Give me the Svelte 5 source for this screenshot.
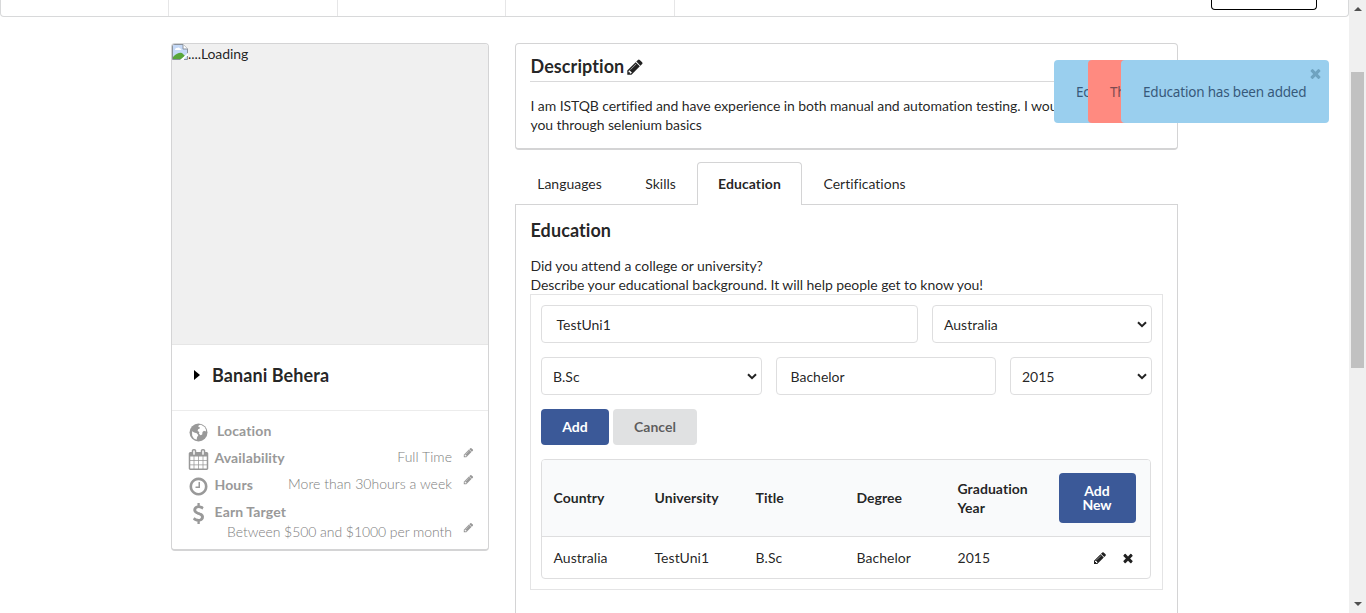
<script>
  const navCells = [0, 1, 2, 3];
  const tabs = [
    { label: 'Languages', width: 109 },
    { label: 'Skills', width: 73 },
    { label: 'Education', width: 105 },
    { label: 'Certifications', width: 125 }
  ];
  const active = 'Education';
  const columns = ['Country', 'University', 'Title', 'Degree', 'Graduation Year'];
  const record = ['Australia', 'TestUni1', 'B.Sc', 'Bachelor', '2015'];

  const pencil =
    'M491 1536l91-91-235-235-91 91v107h128v128h107zm523-928q0-22-22-22-10 0-17 7l-542 542q-7 7-7 17 0 22 22 22 10 0 17-7l542-542q7-7 7-17zm-54-192l416 416-832 832h-416v-416zm683 96q0 53-37 90l-166 166-416-416 166-165q36-38 90-38 53 0 91 38l235 234q37 39 37 91z';
  const cross =
    'M1490 1322q0 40-28 68l-136 136q-28 28-68 28t-68-28l-294-294-294 294q-28 28-68 28t-68-28l-136-136q-28-28-28-68t28-68l294-294-294-294q-28-28-28-68t28-68l136-136q28-28 68-28t68 28l294 294 294-294q28-28 68-28t68 28l136 136q28 28 28 68t-28 68l-294 294 294 294q28 28 28 68z';
  const calendar =
    'M192 1664h288v-288h-288v288zm352 0h320v-288h-320v288zm-352-352h288v-320h-288v320zm352 0h320v-320h-320v320zm-352-384h288v-288h-288v288zm736 736h320v-288h-320v288zm-384-736h320v-288h-320v288zm768 736h288v-288h-288v288zm-384-352h320v-320h-320v320zm-352-864v-288q0-13-9.5-22.5t-22.5-9.5h-64q-13 0-22.5 9.5t-9.5 22.5v288q0 13 9.5 22.5t22.5 9.5h64q13 0 22.5-9.5t9.5-22.5zm736 864h288v-320h-288v320zm-384-384h320v-288h-320v288zm384 0h288v-288h-288v288zm32-480v-288q0-13-9.5-22.5t-22.5-9.5h-64q-13 0-22.5 9.5t-9.5 22.5v288q0 13 9.5 22.5t22.5 9.5h64q13 0 22.5-9.5t9.5-22.5zm384-64v1280q0 52-38 90t-90 38h-1408q-52 0-90-38t-38-90v-1280q0-52 38-90t90-38h128v-96q0-66 47-113t113-47h64q66 0 113 47t47 113v96h384v-96q0-66 47-113t113-47h64q66 0 113 47t47 113v96h128q52 0 90 38t38 90z';
  const clock =
    'M1024 544v448q0 14-9 23t-23 9h-320q-14 0-23-9t-9-23v-64q0-14 9-23t23-9h224v-352q0-14 9-23t23-9h64q14 0 23 9t9 23zm416 352q0-148-73-273t-198-198-273-73-273 73-198 198-73 273 73 273 198 198 273 73 273-73 198-198 73-273zm224 0q0 209-103 385.5t-279.5 279.5-385.5 103-385.5-103-279.5-279.5-103-385.5 103-385.5 279.5-279.5 385.5-103 385.5 103 279.5 279.5 103 385.5z';
  const dollar =
    'M1362 1185q0 153-99.5 263.5t-258.5 136.5v175q0 14-9 23t-23 9h-135q-13 0-22.5-9.5t-9.5-22.5v-175q-66-9-127.5-31t-101.5-44.5-74-48-46.5-37.5-17.5-18q-17-21-2-41l103-135q7-10 23-12 15-2 24 9l2 2q113 99 243 125 37 8 74 8 81 0 142.5-43t61.5-122q0-28-15-53t-33.5-42-58.5-37.5-66-32-80-32.5q-39-16-61.5-25t-61.5-26.5-62.5-31-56.5-35.5-53.5-42.5-43.5-49-35.5-58-21-66.5-8.5-78q0-138 98-242t255-134v-180q0-13 9.5-22.5t22.5-9.5h135q14 0 23 9t9 23v176q57 6 110.5 23t87 33.5 63.5 37.5 39 29 15 14q17 18 5 38l-81 146q-8 15-23 16-14 3-27-7-3-3-14.5-12t-39-26.5-58.5-32-74.5-26-85.5-11.5q-95 0-155 43t-60 111q0 26 8.5 48t29.5 41.5 39.5 33 56 31 60.5 27 70 27.5q53 20 81 31.5t76 35 75.5 42.5 62 50 53 63.5 31.5 76.5 13 94z';
</script>

{#snippet icon(path, size)}
  <svg class="icon" width={size} height={size} viewBox="0 0 1792 1792" aria-hidden="true"><path d={path} /></svg>
{/snippet}

{#snippet picker(value)}
  <div class="field select">
    <span>{value}</span>
    <svg width="10" height="7" viewBox="0 0 10 7" aria-hidden="true"><path d="M1 1.2l4 4 4-4" /></svg>
  </div>
{/snippet}

<div class="window">
  <div class="page">
    <nav>
      {#each navCells as cell (cell)}<div class="cell"></div>{/each}
      <div class="outline"></div>
    </nav>

    <main>
      <aside class="card">
        <div class="photo">
          <svg width="16" height="16" viewBox="0 0 16 16" aria-hidden="true">
            <path d="M.5 .5H11l4.5 4.5v10.500H.5z" fill="#fff" />
            <path d="M1 1h10v4h4v10H1z" fill="#c5d9f7" />
            <path d="M3 5.500q.3-2 2-1.500 1.800-1.400 3 .4 1.600 0 1.400 1.600H3z" fill="#fff" />
            <path d="M1 15v-2q5-5 9-4l3 3-3 3z" fill="#58a63b" />
            <path d="M.5 15.500V.5H11l4.500 4.500v4.500M.5 15.500H9" fill="none" stroke="#8b929c" />
            <path d="M11 .5V5h4.500" fill="#fff" stroke="#8b929c" />
            <path d="M8 16l8-7v2l-5 5z" fill="#fff" />
            <path d="M12 15.500h3.500V12" fill="none" stroke="#8b929c" />
          </svg><span>....Loading</span>
        </div>
        <div class="name">
          <svg width="6" height="10" viewBox="0 0 6 10" aria-hidden="true"><path d="M0 0l6 5-6 5z" /></svg>
          <h2>Banani Behera</h2>
        </div>
        <div class="facts">
          <div class="fact location">
            <svg class="glyph" width="19" height="19" viewBox="0 0 19 19" aria-hidden="true">
              <circle cx="9.500" cy="9.500" r="9" />
              <path class="sea" d="M9.800 2.200l2.200-.5 3.600 2.200 1.500 3-.5 1.500-1.600-.6-1.500 1.200-.3 2.500-1.700.7-1.500-1.500.3-1.800-1.700-.8.5-1.800 1.700-.7-.2-1.600-1.400-.2zM3 8.200l2.200 1.300 2.600.8 1.500 2-1.200 1.800-.5 2.600-2.700-1.300-1.700-2.600z" />
            </svg>
            <b>Location</b>
          </div>
          <div class="fact">
            <span class="glyph">{@render icon(calendar, 21)}</span><b>Availability</b>
            <span class="value wide">Full Time</span><span class="edit">{@render icon(pencil, 11)}</span>
          </div>
          <div class="fact">
            <span class="glyph">{@render icon(clock, 21)}</span><b>Hours</b>
            <span class="value wide">More than 30hours a week</span><span class="edit">{@render icon(pencil, 11)}</span>
          </div>
          <div class="fact earn">
            <span class="glyph">{@render icon(dollar, 21)}</span><b>Earn Target</b>
          </div>
          <div class="fact last">
            <span class="value">Between $500 and $1000 per month</span><span class="edit">{@render icon(pencil, 11)}</span>
          </div>
        </div>
      </aside>

      <div class="content">
        <section class="description">
          <h3>Description<span>{@render icon(pencil, 18)}</span></h3>
          <p>I am ISTQB certified and have experience in both manual and automation testing. I wou<br />you through selenium basics</p>
        </section>

        <div class="tabs">
          {#each tabs as tab (tab.label)}
            <div class="tab" class:active={tab.label === active} style:width="{tab.width}px">{tab.label}</div>
          {/each}
        </div>

        <section class="panel">
          <h3>Education</h3>
          <p>Did you attend a college or university?<br />Describe your educational background. It will help people get to know you!</p>
          <div class="editor">
            <div class="row first">
              <div class="field wide">TestUni1</div>
              {@render picker('Australia')}
            </div>
            <div class="row second">
              {@render picker('B.Sc')}
              <div class="field">Bachelor</div>
              {@render picker('2015')}
            </div>
            <div class="buttons">
              <button class="primary add">Add</button>
              <button class="cancel">Cancel</button>
            </div>
            <div class="table">
              <div class="line head">
                {#each columns as column (column)}<div class="title">{column}</div>{/each}
                <div><button class="primary new">Add<br />New</button></div>
              </div>
              <div class="line">
                {#each record as item (item)}<div>{item}</div>{/each}
                <div class="actions">{@render icon(pencil, 14)}{@render icon(cross, 14)}</div>
              </div>
            </div>
          </div>
        </section>
      </div>
    </main>

    <div class="toast one">Ec</div>
    <div class="toast two">Th</div>
    <div class="toast three">Education has been added<span>{@render icon(cross, 15)}</span></div>
  </div>

  <div class="scrollbar">
    <svg width="8" height="4" viewBox="0 0 8 4" aria-hidden="true"><path d="M4 0l4 4H0z" /></svg>
    <div class="thumb"></div>
    <svg width="8" height="4" viewBox="0 0 8 4" aria-hidden="true"><path d="M0 0h8L4 4z" /></svg>
  </div>
</div>

<style>
  .window {
    display: flex;
    width: 1366px;
    height: 613px;
    overflow: hidden;
    background: #fff;
    color: rgba(0, 0, 0, 0.87);
    font: 14px/19px Lato, sans-serif;
    font-variant-ligatures: none;
  }
  .window, .window * { box-sizing: border-box; }
  .icon { display: block; fill: currentColor; }
  h2, h3, p { margin: 0; }
  h2, h3 { font-size: 18px; line-height: 23px; font-weight: 700; letter-spacing: 0.08px; }
  p { letter-spacing: -0.06px; white-space: nowrap; }
  .page { position: relative; width: 1349px; height: 613px; overflow: hidden; }

  nav {
    display: flex;
    height: 17px;
    border: 1px solid #d8d9da;
    border-top: 0;
    border-radius: 0 0 4px 4px;
  }
  .cell { flex: 0 0 168.450px; border-right: 1px solid #e6e6e7; }
  .outline {
    width: 106px;
    height: 10px;
    margin: 0 31px 0 auto;
    border: 1px solid #000;
    border-top: 0;
    border-radius: 0 0 4px 4px;
  }

  main { display: flex; align-items: flex-start; gap: 26px; padding: 26px 171px 0; }
  .card {
    width: 318px;
    height: 508px;
    border: 1px solid #d4d4d5;
    border-bottom-width: 2px;
    border-radius: 4px;
    overflow: hidden;
  }
  .photo {
    display: flex;
    align-items: flex-start;
    height: 300px;
    background: #f0f0f0;
  }
  .photo span { line-height: 20px; letter-spacing: -0.08px; }
  .name {
    display: flex;
    align-items: center;
    gap: 12px;
    height: 67px;
    padding: 0 0 5px 22px;
    border-top: 1px solid #e6e6e6;
    border-bottom: 1px solid #ececec;
  }
  .name h2 { padding-top: 1px; }
  .facts { padding: 6px 13px 0 16px; color: #999; }
  .fact { display: flex; height: 27px; }
  .glyph { flex: none; width: 21px; margin: 5px 5.500px 0 0; }
  .location .glyph { width: 19px; margin: 6px 9px 0 1px; fill: #999; }
  .location .sea { fill: #fff; }
  .fact b { line-height: 27px; letter-spacing: 0.13px; }
  .value { margin-left: auto; line-height: 25px; font-weight: 300; color: #7d7d7d; }
  .value.wide { letter-spacing: 0.04px; }
  .last .value { letter-spacing: -0.06px; }
  .edit { margin: 3px 1px 0 11px; }
  .fact.earn { height: 21px; }

  .content { width: 663px; }
  .description {
    height: 107px;
    padding: 11px 14px;
    border: 1px solid #d4d4d5;
    border-bottom-width: 2px;
    border-radius: 4px;
  }
  .description h3 { display: flex; height: 27px; border-bottom: 1px solid #d9d9da; padding-left: 0.500px; }
  .description h3 span { padding-top: 3px; margin-left: 2px; }
  .description p { padding: 14px 0 0 0.500px; letter-spacing: -0.085px; }

  .tabs { display: flex; margin-top: 12px; height: 43px; position: relative; z-index: 1; }
  .tab {
    flex: none;
    padding-top: 11px;
    height: 43px;
    border: 1px solid transparent;
    border-bottom: 0;
    text-align: center;
  }
  .tab.active {
    background: #fff;
    border-color: #d4d4d5;
    border-radius: 4px 4px 0 0;
    font-weight: 700;
    letter-spacing: 0.08px;
  }
  .panel {
    width: 663px;
    margin-top: -1px;
    height: 440px;
    padding: 14px 14px 0;
    border: 1px solid #d4d4d5;
  }
  .panel h3, .panel p { padding-left: 0.500px; }
  .panel p { margin-top: 14px; }
  .editor { height: 296px; padding: 10px; border: 1px solid #e4e4e5; }
  .row { display: grid; gap: 14px; }
  .first { grid-template-columns: 377px 220px; }
  .second { grid-template-columns: 221px 220px 142px; margin-top: 14px; }
  .field {
    height: 38px;
    padding: 0 13.500px;
    border: 1px solid #dededf;
    border-radius: 4px;
    line-height: 38px;
  }
  .field.wide { padding-left: 14.500px; }
  .select { display: flex; align-items: center; justify-content: space-between; padding: 0 4px 0 11px; }
  .select span { padding-top: 2px; }
  .select svg { fill: none; stroke: #222; stroke-width: 2; }
  .buttons { display: flex; gap: 4px; margin: 14px 0; }
  button {
    height: 36px;
    padding: 0;
    border: 0;
    border-radius: 4px;
    font: 700 14px/14px Lato, sans-serif;
  }
  .primary { background: #3b5998; color: #fff; }
  .add { width: 68px; }
  .cancel { width: 84px; background: #e0e1e2; color: rgba(0, 0, 0, 0.6); }
  .new { display: block; width: 77px; height: 50px; }
  .table { width: 610px; border: 1px solid #dededf; border-radius: 4px; overflow: hidden; }
  .line {
    display: grid;
    grid-template-columns: repeat(5, 101px) 1fr;
    align-items: center;
    height: 41px;
    padding-left: 11.500px;
    letter-spacing: 0.04px;
  }
  .line.head { height: 77px; background: #f9fafb; border-bottom: 1px solid #dededf; font-weight: 700; }
  .title { padding: 0 22px 1px 0; }
  .actions { display: flex; gap: 14px; padding-left: 34px; }

  .toast {
    position: absolute;
    top: 60px;
    height: 63px;
    padding-left: 22px;
    border-radius: 4px;
    background: #9acfee;
    color: #37597a;
    font: 13.500px/64px "Noto Sans", sans-serif;
    letter-spacing: -0.190px;
    white-space: nowrap;
    overflow: hidden;
  }
  .one { left: 1054px; width: 40px; }
  .two { left: 1088px; width: 40px; background: #ff8a80; color: #7d4a51; }
  .three { left: 1121px; width: 208px; }
  .three span { position: absolute; top: 6px; right: 6px; color: #6fa3c0; }

  .scrollbar {
    display: flex;
    flex-direction: column;
    align-items: center;
    width: 17px;
    padding: 7px 0;
    background: #f0f0f0;
  }
  .scrollbar svg { fill: #505050; }
  .thumb { width: 13px; height: 296px; margin: 61px 0 auto; background: #c1c1c1; }
</style>
